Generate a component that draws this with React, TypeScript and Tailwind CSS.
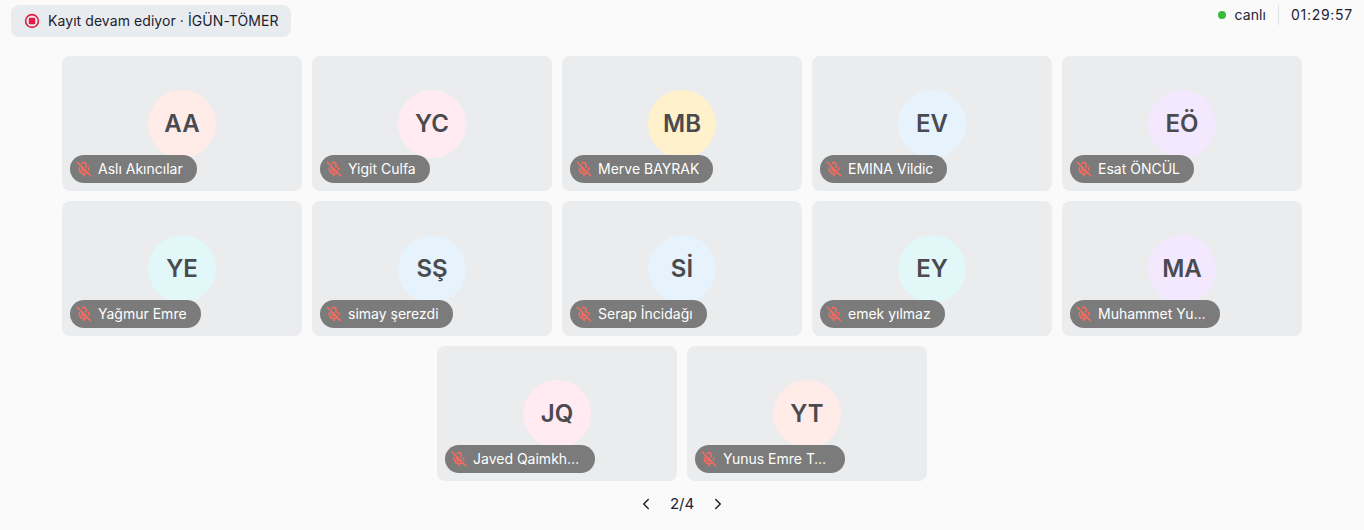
import React from "react";
import { ChevronLeft, ChevronRight, MicOff } from "lucide-react";

const red = "bg-[#ffebe8]";
const pink = "bg-[#ffebf1]";
const amber = "bg-[#fff1cc]";
const blue = "bg-[#e6f3fd]";
const purple = "bg-[#f3e8fd]";
const teal = "bg-[#e1f7f8]";

type P = { i: string; n: string; c: string };
const rows: P[][] = [
  [
    { i: "AA", n: "Aslı Akıncılar", c: red },
    { i: "YC", n: "Yigit Culfa", c: pink },
    { i: "MB", n: "Merve BAYRAK", c: amber },
    { i: "EV", n: "EMINA Vildic", c: blue },
    { i: "EÖ", n: "Esat ÖNCÜL", c: purple },
  ],
  [
    { i: "YE", n: "Yağmur Emre", c: teal },
    { i: "SŞ", n: "simay şerezdi", c: blue },
    { i: "Sİ", n: "Serap İncidağı", c: blue },
    { i: "EY", n: "emek yılmaz", c: teal },
    { i: "MA", n: "Muhammet Yusuf Aksoy", c: purple },
  ],
  [
    { i: "JQ", n: "Javed Qaimkhani", c: pink },
    { i: "YT", n: "Yunus Emre Tunç", c: red },
  ],
];

function Tile({ p }: { p: P }) {
  return (
    <div className="relative flex h-[135px] w-[240px] items-center justify-center rounded-lg bg-[#ebecee]">
      <div className={`flex h-[68px] w-[68px] items-center justify-center rounded-full text-2xl leading-none font-semibold text-[#4a4a4f] ${p.c}`}>
        {p.i}
      </div>
      <div className="absolute bottom-2 left-2 flex h-7 max-w-[150px] items-center gap-1.5 rounded-full bg-[#7a7b7a] pr-[14px] pl-1.5 text-sm text-white">
        <MicOff className="h-4 w-4 shrink-0 text-[#ff6a5e]" strokeWidth={2.25} />
        <span className="truncate">{p.n}</span>
      </div>
    </div>
  );
}

export default function App() {
  return (
    <div className="flex h-[530px] w-[1364px] flex-col overflow-hidden bg-[#fafafa] font-['Inter',sans-serif] text-[#1c2233]">
      <header className="flex h-[56px] items-start justify-between pr-[11px] pl-[11px]">
        <div className="mt-[5px] flex h-8 items-center gap-[7px] rounded-lg bg-[#e9ecee] px-3 text-sm tracking-[0.07px]">
          <svg width="18" height="18" viewBox="0 0 18 18" fill="none" className="shrink-0">
            <circle cx="9" cy="9" r="6.4" stroke="#e11d48" strokeWidth="1.6" />
            <rect x="5.75" y="5.75" width="6.5" height="6.5" rx="1.25" fill="#e11d48" />
          </svg>
          <span>Kayıt devam ediyor · İGÜN-TÖMER</span>
        </div>
        <div className="mt-[5px] flex items-center text-sm tracking-[0.08px]">
          <span className="h-2 w-2 rounded-full bg-[#3cb83c]" />
          <span className="ml-[9px]">canlı</span>
          <span className="mx-3 h-5 w-px bg-[#dfe1e3]" />
          <span className="tracking-[0.72px]">01:29:57</span>
        </div>
      </header>
      <main className="flex flex-col items-center gap-2.5">
        {rows.map((r, idx) => (
          <div key={idx} className="flex gap-2.5">
            {r.map((p) => (
              <Tile key={p.i} p={p} />
            ))}
          </div>
        ))}
      </main>
      <nav className="mt-3 flex h-[22px] items-center justify-center text-[15px]">
        <ChevronLeft className="h-[18px] w-[18px]" />
        <span className="mx-[15px]">2/4</span>
        <ChevronRight className="h-[18px] w-[18px]" />
      </nav>
    </div>
  );
}
